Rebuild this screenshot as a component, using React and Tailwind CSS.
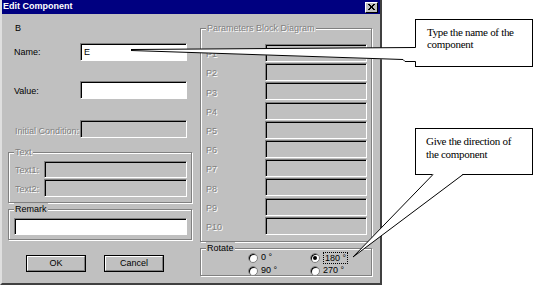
import React from "react";

const gray = "[text-shadow:1px_1px_0_#fff] text-[#808080]";

function Field({ className = "", white = false, children }) {
  return (
    <div
      className={`border-t border-l border-b border-r border-t-[#808080] border-l-[#808080] border-b-white border-r-white ${
        white ? "bg-white" : "bg-[#c0c0c0]"
      } ${className}`}
    >
      <div className="h-full border-t border-l border-t-black border-l-black pl-[2px] leading-[14px]">
        {children}
      </div>
    </div>
  );
}

function Group({ label, className = "", children }) {
  return (
    <div className={`relative border border-[#808080] shadow-[1px_1px_0_#fff,inset_1px_1px_0_#fff] ${className}`}>
      <span className="absolute -top-[7px] left-[5px] bg-[#c0c0c0] px-[1px] leading-[12px]">
        {label}
      </span>
      {children}
    </div>
  );
}

function Radio({ checked, children }) {
  return (
    <div className="flex items-center gap-[3px] h-[13px]">
      <span className="w-[10px] h-[10px] rounded-full bg-white border border-[#808080] shadow-[inset_1px_1px_0_#000] flex items-center justify-center">
        {checked && <span className="w-[4px] h-[4px] rounded-full bg-black" />}
      </span>
      {children}
    </div>
  );
}

function Button({ children }) {
  return (
    <div className="w-[60px] h-[17px] border border-black">
      <div className="h-full border-t border-l border-t-white border-l-white border-b border-r border-b-[#808080] border-r-[#808080] flex items-center justify-center">
        {children}
      </div>
    </div>
  );
}

const params = ["P1", "P2", "P3", "P4", "P5", "P6", "P7", "P8", "P9", "P10"];

export default function App() {
  return (
    <div className="relative w-[535px] h-[286px] bg-white font-['Liberation_Sans',Arial,sans-serif] text-[9px] text-black">
      {/* dialog */}
      <div className="w-[382px] h-[285px] bg-[#c0c0c0] border-l-2 border-r-2 border-b-2 border-l-[#dfdfdf] border-r-[#404040] border-b-[#404040] flex flex-col">
        <div className="h-[14px] bg-[#000080] flex items-center justify-between pl-[1px] pr-[2px]">
          <span className="text-white font-bold text-[9px]">Edit Component</span>
          <div className="w-[13px] h-[11px] bg-[#c0c0c0] border-t border-l border-t-white border-l-white border-b border-r border-b-black border-r-black flex items-center justify-center">
            <svg width="7" height="6" viewBox="0 0 7 6">
              <path d="M0 0 L6 6 M1 0 L7 6 M6 0 L0 6 M7 0 L1 6" stroke="#000" strokeWidth="1" />
            </svg>
          </div>
        </div>

        <div className="flex pl-[6px] gap-[8px]">
          {/* left column */}
          <div className="w-[184px] flex flex-col">
            <div className="mt-[9px] pl-[7px] leading-[11px]">B</div>
            <div className="mt-[9px] flex items-center h-[18px]">
              <span className="pl-[6px] w-[72px] pt-[2px]">Name:</span>
              <Field white className="w-[107px] h-[18px]">E</Field>
            </div>
            <div className="mt-[20px] flex items-center h-[18px]">
              <span className="pl-[6px] w-[72px] pt-[4px]">Value:</span>
              <Field white className="w-[107px] h-[18px]" />
            </div>
            <div className="mt-[21px] flex items-center h-[18px]">
              <span className={`pl-[7px] w-[72px] pt-[6px] ${gray}`}>Initial Condition:</span>
              <Field className="w-[107px] h-[18px]" />
            </div>
            <Group label={<span className={gray}>Text</span>} className="mt-[14px] h-[51px] pt-[7px]">
              <div className="flex items-center h-[18px]">
                <span className={`pl-[6px] w-[35px] pt-[4px] ${gray}`}>Text1:</span>
                <Field className="w-[143px] h-[17px]" />
              </div>
              <div className="mt-[1px] flex items-center h-[18px]">
                <span className={`pl-[6px] w-[35px] pt-[4px] ${gray}`}>Text2:</span>
                <Field className="w-[143px] h-[18px]" />
              </div>
            </Group>
            <Group label="Remark" className="mt-[6px] h-[31px] pt-[8px] pl-[5px]">
              <Field white className="w-[173px] h-[17px]" />
            </Group>
            <div className="mt-[15px] flex pl-[18px] gap-[18px]">
              <Button>OK</Button>
              <Button>Cancel</Button>
            </div>
          </div>

          {/* right column */}
          <div className="w-[172px] flex flex-col">
            <Group
              label={<span className={gray}>Parameters Block Diagram</span>}
              className="mt-[14px] h-[214px] pt-[15px]"
            >
              <div className="flex flex-col gap-[1.2px]">
                {params.map((p) => (
                  <div key={p} className="flex items-center h-[18px]">
                    <span className={`pl-[5px] w-[64px] pt-[4px] ${gray}`}>{p}</span>
                    <Field className="w-[102px] h-[18px]" />
                  </div>
                ))}
              </div>
            </Group>
            <Group label="Rotate" className="mt-[6px] h-[28px] pt-[2px]">
              <div className="grid grid-cols-[62px_70px] pl-[47px] leading-[11px]">
                <Radio>0 °</Radio>
                <Radio checked>
                  <span className="border border-dotted border-black px-[1px] leading-[10px]">180 °</span>
                </Radio>
                <Radio>90 °</Radio>
                <Radio>270 °</Radio>
              </div>
            </Group>
          </div>
        </div>
      </div>

      {/* callouts */}
      <div className="absolute left-[415px] top-[19px] w-[118px] h-[48px] border border-black bg-white pl-[11px] pt-[6px] font-['Liberation_Serif',serif] text-[11px] leading-[12px] tracking-[-0.3px]">
        Type the name of the
        <br />
        component
      </div>
      <div className="absolute left-[415px] top-[128px] w-[118px] h-[47px] border border-black bg-white pl-[10px] pt-[6px] font-['Liberation_Serif',serif] text-[11px] leading-[13px] tracking-[-0.3px]">
        Give the direction of
        <br />
        the component
      </div>
      <svg className="absolute left-0 top-0 pointer-events-none" width="535" height="286">
        <polygon points="131,49.5 416,47.5 416,61.5 403,60 131,50.5" fill="#fff" />
        <polyline points="131,49.5 415.5,47.5" fill="none" stroke="#000" strokeWidth="1" />
        <polyline points="131,50.5 403,59.5 405,61.5 415.5,61.5" fill="none" stroke="#000" strokeWidth="1" />
        <polygon points="433,174 463,174 353,257" fill="#fff" />
        <polyline points="433,174.5 353,257 463,174.5" fill="none" stroke="#000" strokeWidth="1" />
      </svg>
    </div>
  );
}
